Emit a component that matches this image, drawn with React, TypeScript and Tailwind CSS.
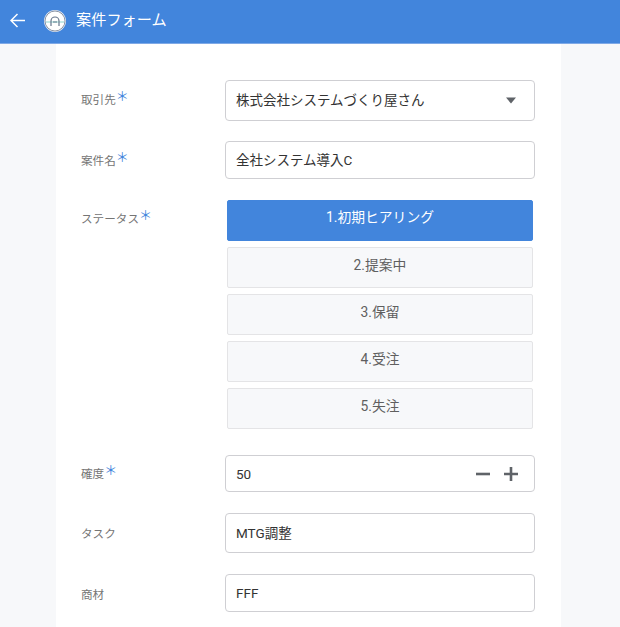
const font = { fontFamily: '"Roboto","Noto Sans CJK JP",sans-serif' };

function Label({ text, star, cls }: { text: string; star?: boolean; cls: string }) {
  return (
    <div className={`flex w-[144px] shrink-0 items-start text-[11.6px] leading-[20px] text-[#757575] ${cls}`}>
      {text}
      {star && <span className="relative top-[-3px] text-[13px] leading-[20px] text-[#4285dc]">＊</span>}
    </div>
  );
}

function Field({ value, h, cls, children }: { value: string; h: string; cls?: string; children?: React.ReactNode }) {
  return (
    <div className={`flex w-[310px] items-center justify-between rounded-[4px] border border-[#cfcfd3] bg-white pl-[10px] text-[13.5px] text-[#333] ${h}`}>
      <span className={cls}>{value}</span>
      {children}
    </div>
  );
}

function Status({ text, active }: { text: string; active?: boolean }) {
  return (
    <div className={`flex h-[41px] w-[306px] justify-center rounded-[2px] border text-[13.8px] ${active ? "border-[#4285dc] bg-[#4285dc] pt-[6px] text-white" : "border-[#e4e4e6] bg-[#f7f8fa] pt-[7px] text-[#5f5f5f]"}`}>
      {text}
    </div>
  );
}

export default function App() {
  return (
    <div className="flex h-[627px] w-[620px] flex-col overflow-hidden bg-[#f7f8fa]" style={font}>
      <header className="flex h-[44px] shrink-0 items-center border-b border-[#7fa9e6] bg-[#4285dc] pl-[10px] text-white">
        <svg width="15" height="15" viewBox="0 0 15 15" fill="none" stroke="white" strokeWidth="1.5" className="mb-[2px]">
          <path d="M15 7.5H1.5M7.5 1 1 7.5 7.5 14" />
        </svg>
        <svg width="24" height="24" viewBox="0 0 24 24" className="mb-[1px] ml-[18px]">
          <circle cx="12" cy="12" r="11" fill="#e8eef6" />
          <circle cx="12" cy="12" r="10" fill="#fff" stroke="#8a94a6" strokeWidth="1" />
          <path d="M3 13h18" stroke="#9fdcd8" strokeWidth="1.2" />
          <path d="M8 17v-5a4 4 0 0 1 8 0v5M10 13h4" fill="none" stroke="#67768c" strokeWidth="1.2" />
        </svg>
        <span className="mb-[3px] ml-[9px] text-[15.2px]">案件フォーム</span>
      </header>
      <main className="ml-[56px] mr-[59px] flex flex-1 flex-col bg-white pl-[25px] pt-[36px]">
        <div className="flex">
          <Label text="取引先" star cls="pt-[10px]" />
          <Field value="株式会社システムづくり屋さん" h="h-[41px]">
            <svg width="12" height="7" viewBox="0 0 12 7" className="mr-[17px]"><path d="M1 0.5h10L6 6.5z" fill="#5f6368" /></svg>
          </Field>
        </div>
        <div className="mt-[20px] flex">
          <Label text="案件名" star cls="pt-[10px]" />
          <Field value="全社システム導入C" h="h-[38px]" cls="mt-[1px]" />
        </div>
        <div className="mt-[21px] flex">
          <Label text="ステータス" star cls="pt-[9px]" />
          <div className="flex flex-col gap-[6px] pl-[2px]">
            <Status text="1.初期ヒアリング" active />
            <Status text="2.提案中" />
            <Status text="3.保留" />
            <Status text="4.受注" />
            <Status text="5.失注" />
          </div>
        </div>
        <div className="mt-[26px] flex">
          <Label text="確度" star cls="pt-[9px]" />
          <Field value="50" h="h-[37px]" cls="mt-[1px]">
            <div className="mr-[16px] flex items-center gap-[14px]">
              <svg width="14" height="14" viewBox="0 0 14 14"><path d="M0 7h14" stroke="#5f6368" strokeWidth="2.6" /></svg>
              <svg width="14" height="14" viewBox="0 0 14 14"><path d="M0 7h14M7 0v14" stroke="#5f6368" strokeWidth="2.6" /></svg>
            </div>
          </Field>
        </div>
        <div className="mt-[21px] flex">
          <Label text="タスク" cls="pt-[11px]" />
          <Field value="MTG調整" h="h-[40px]" />
        </div>
        <div className="mt-[21px] flex">
          <Label text="商材" cls="pt-[11px]" />
          <Field value="FFF" h="h-[38px]" />
        </div>
      </main>
    </div>
  );
}
